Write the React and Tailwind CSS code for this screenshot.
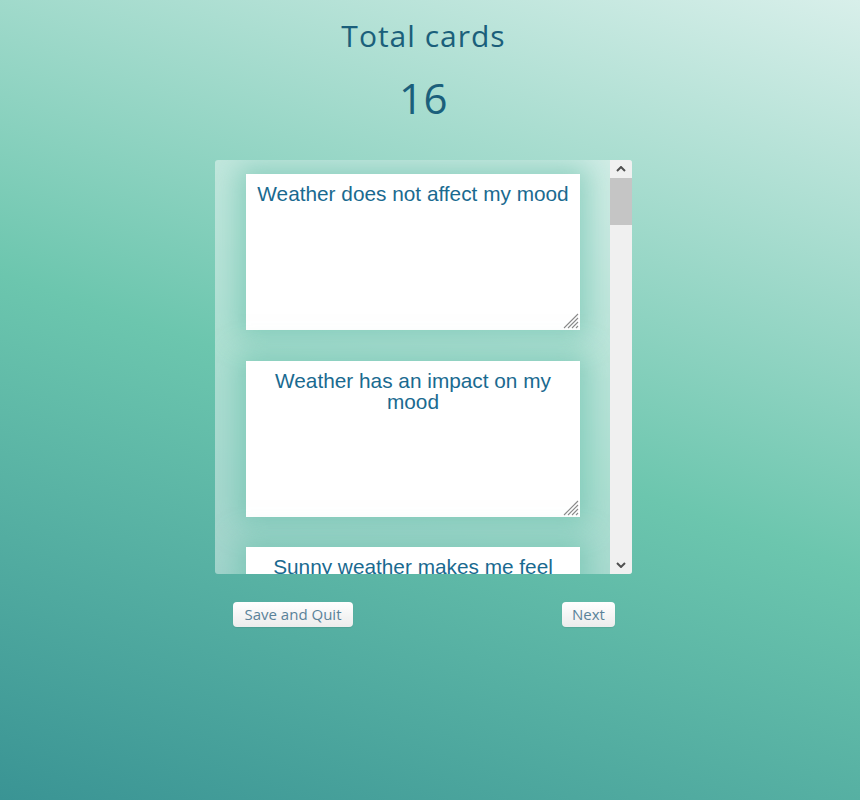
import React from "react";

function Resize() {
  return (
    <svg className="absolute right-[1px] bottom-[1px]" width="18" height="18" viewBox="0 0 18 18">
      <line x1="17" y1="3" x2="3" y2="17" stroke="#8a8a8a" strokeWidth="1.1" />
      <line x1="17" y1="7" x2="7" y2="17" stroke="#8a8a8a" strokeWidth="1.1" />
      <line x1="17" y1="11" x2="11" y2="17" stroke="#8a8a8a" strokeWidth="1.1" />
      <line x1="17" y1="15" x2="15" y2="17" stroke="#8a8a8a" strokeWidth="1.1" />
    </svg>
  );
}

function Card({ text }) {
  return (
    <div className="relative shrink-0 w-[334px] h-[156px] bg-white shadow-[0_0_26px_8px_rgba(95,188,165,0.55)] px-[11px] pt-[9px] text-center text-[20.8px] leading-[21px] text-[#1a6a90]" style={{ fontFamily: '"Liberation Sans", Arial, sans-serif' }}>
      {text}
      <Resize />
    </div>
  );
}

export default function App() {
  return (
    <div className="min-h-[800px] w-full bg-[linear-gradient(19deg,#3a9494_0%,#6cc6ae_48%,#d8efea_100%)]" style={{ fontFamily: '"Open Sans", Lato, sans-serif' }}>
      <div className="flex flex-col items-center pr-[13px] pt-[16px]">
        <h2 className="text-[30px] leading-[40px] tracking-[1px] text-[#1b5f7b]">Total cards</h2>
        <div className="mt-[17px] text-[42px] leading-[50px] tracking-[0.5px] text-[#1b5f7b]">16</div>
        <div className="mt-[37px] flex w-[417px] h-[414px] rounded-[3px] overflow-hidden bg-white/45">
          <div className="flex-1 overflow-hidden flex flex-col gap-[30.5px] pl-[31px] pt-[14px]">
            <Card text="Weather does not affect my mood" />
            <Card text="Weather has an impact on my mood" />
            <Card text="Sunny weather makes me feel happier" />
          </div>
          <div className="w-[22px] h-full bg-[#f0f0f0] flex flex-col">
            <div className="h-[18px] flex items-center justify-center">
              <svg width="10" height="6" viewBox="0 0 10 6"><path d="M1 5 L5 1 L9 5" fill="none" stroke="#505050" strokeWidth="2" /></svg>
            </div>
            <div className="h-[47px] bg-[#c5c5c5]" />
            <div className="flex-1" />
            <div className="h-[18px] flex items-center justify-center">
              <svg width="10" height="6" viewBox="0 0 10 6"><path d="M1 1 L5 5 L9 1" fill="none" stroke="#505050" strokeWidth="2" /></svg>
            </div>
          </div>
        </div>
        <div className="mt-[28px] w-[417px] flex justify-between pl-[18px] pr-[17px]">
          <button className="h-[25px] w-[120px] rounded-[4px] bg-[linear-gradient(#ffffff,#ececec)] text-[15px] leading-[25px] text-[#5a8299] shadow-[0_1px_1px_rgba(0,0,0,0.08)]">Save and Quit</button>
          <button className="h-[25px] w-[53px] rounded-[4px] bg-[linear-gradient(#ffffff,#ececec)] text-[15px] leading-[25px] text-[#5a8299] shadow-[0_1px_1px_rgba(0,0,0,0.08)]">Next</button>
        </div>
      </div>
    </div>
  );
}
